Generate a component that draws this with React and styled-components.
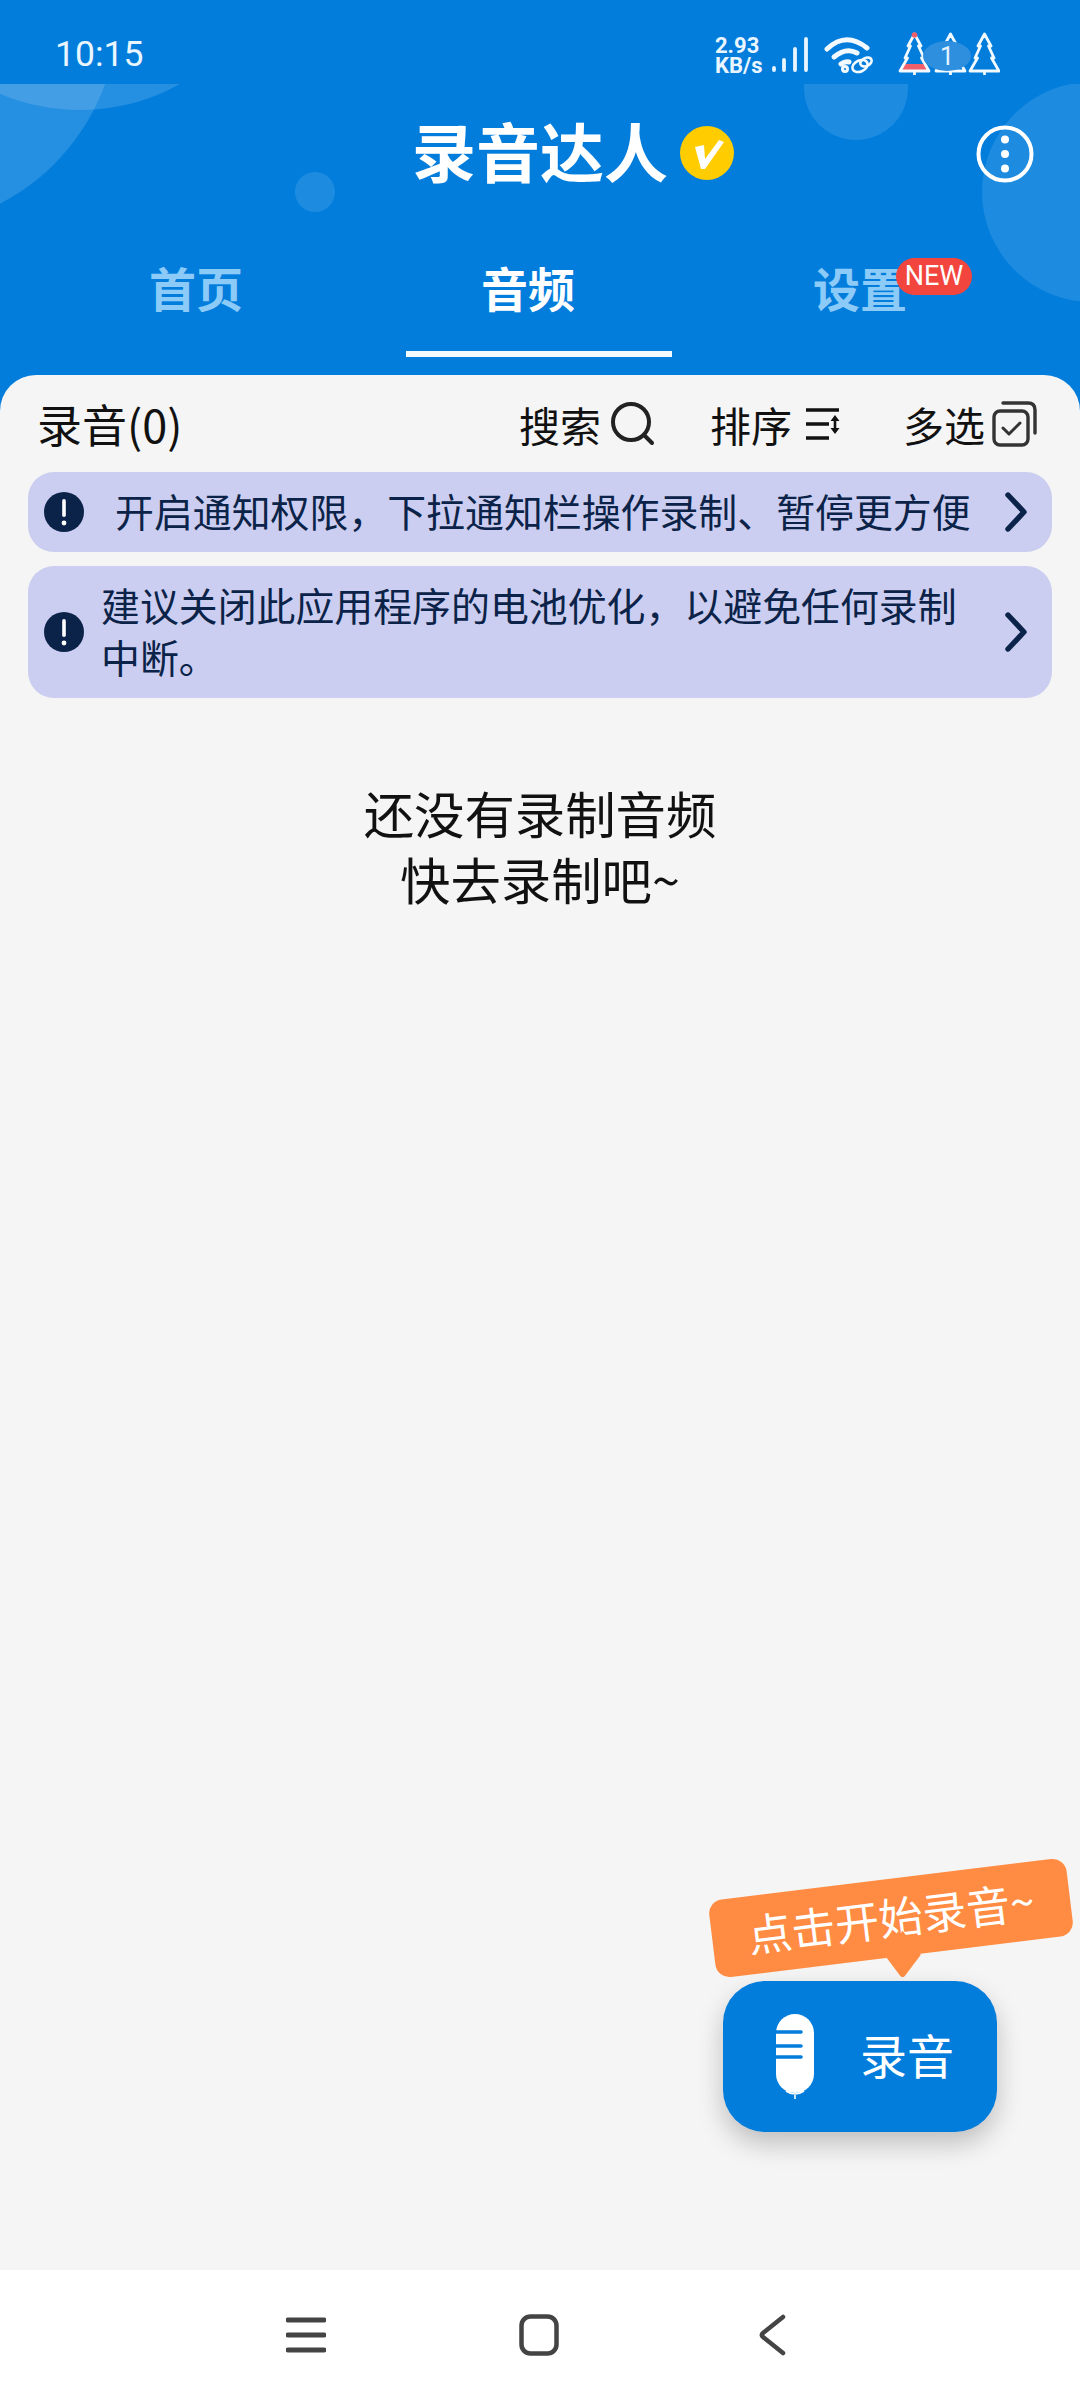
import React from "react";
import styled, { createGlobalStyle } from "styled-components";

const Global = createGlobalStyle`
  html, body { margin: 0; padding: 0; background: #027ddc; }
  * { box-sizing: border-box; }
  body { font-family: "Noto Sans CJK SC", "Noto Sans", sans-serif; }
`;

const Page = styled.div`
  width: 1080px;
  height: 2400px;
  display: flex;
  flex-direction: column;
  background: #027ddc;
  overflow: hidden;
`;

const Header = styled.header`
  position: relative;
  height: 375px;
  flex: none;
  color: #fff;
  overflow: hidden;
`;

const Decor = styled.svg`
  position: absolute;
  left: 0;
  top: 84px;
  width: 1080px;
  height: 291px;
`;

const StatusBar = styled.div`
  position: relative;
  height: 84px;
  display: flex;
  align-items: center;
  padding: 26px 0 0 55px;
`;

const Time = styled.span`
  font-family: Roboto, sans-serif;
  font-size: 35.5px;
  line-height: 1;
  color: #eaf6ff;
`;

const StatusRight = styled.div`
  margin-left: auto;
  margin-right: 80px;
  display: flex;
  align-items: center;
`;

const Speed = styled.div`
  font-family: Roboto, sans-serif;
  font-weight: 700;
  font-size: 22px;
  line-height: 20px;
  width: 56px;
  padding: 1px 0 0 1px;
  color: #eaf6ff;
`;

const StatusIcons = styled.svg`
  display: block;
  width: 230px;
  height: 50px;
`;

const TitleBar = styled.div`
  position: relative;
  height: 66px;
  margin-top: 36px;
  display: flex;
  justify-content: center;
  align-items: center;
`;

const Title = styled.h1`
  position: relative;
  top: -4px;
  margin: 0;
  font-size: 64px;
  line-height: 66px;
  font-weight: 700;
  color: #fff;
`;

const VBadge = styled.svg`
  position: absolute;
  left: 268px;
  top: 10px;
  width: 54px;
  height: 54px;
`;

const MenuButton = styled.svg`
  position: absolute;
  left: 976px;
  top: 5px;
  width: 58px;
  height: 58px;
`;

const Tabs = styled.nav`
  display: grid;
  grid-template-columns: repeat(3, 332px);
  padding-left: 30px;
  margin-top: 71px;
`;

const Tab = styled.div`
  position: relative;
  height: 60px;
  text-align: center;
  font-size: 47px;
  line-height: 60px;
  font-weight: 700;
  color: ${(p) => (p.$active ? "#fff" : "#8ccaf8")};
  ${(p) =>
    p.$active &&
    `&::after {
      content: "";
      position: absolute;
      left: 44px;
      top: 94px;
      width: 266px;
      height: 6px;
      background: #f4fbff;
    }`}
`;

const NewBadge = styled.span`
  position: absolute;
  left: 202px;
  top: 1px;
  width: 76px;
  height: 37px;
  border-radius: 19px;
  background: #f2453d;
  color: #fff;
  font-family: Roboto, sans-serif;
  font-weight: 400;
  font-size: 27px;
  line-height: 37px;
  text-align: center;
`;

const Content = styled.main`
  position: relative;
  flex: 1;
  background: #f5f5f5;
  border-radius: 36px 36px 0 0;
  display: flex;
  flex-direction: column;
  padding: 0 28px;
`;

const Toolbar = styled.div`
  height: 97px;
  display: flex;
  align-items: center;
  padding: 0 15px 0 9px;
`;

const Count = styled.div`
  font-size: 45px;
  color: #111;
  flex: 1;
`;

const ToolItem = styled.div`
  display: flex;
  align-items: center;
  font-size: 41px;
  line-height: 48px;
  color: #111;
  margin-left: ${(p) => p.$gap}px;
  gap: ${(p) => p.$iconGap}px;
`;

const Notice = styled.div`
  display: flex;
  align-items: center;
  height: ${(p) => p.$h}px;
  margin-bottom: 14px;
  background: #cbcef0;
  border-radius: 26px;
  padding: 0 24px 0 16px;
  color: #0b2348;
`;

const NoticeText = styled.div`
  flex: 1;
  font-size: 38.9px;
  line-height: 52px;
  padding: 0 30px 5px ${(p) => p.$indent}px;
`;

const Empty = styled.div`
  margin-top: 68px;
  text-align: center;
  font-size: 50.4px;
  line-height: 66px;
  color: #111;
`;

const Tip = styled.div`
  position: absolute;
  left: 711px;
  top: 1504px;
  width: 360px;
  height: 78px;
  border-radius: 14px;
  background: #ff8c42;
  color: #fff;
  font-size: 44px;
  line-height: 74px;
  text-align: center;
  white-space: nowrap;
  transform: rotate(-7deg);
  &::after {
    content: "";
    position: absolute;
    left: 172px;
    bottom: -14px;
    width: 30px;
    height: 30px;
    background: #ff8c42;
    border-radius: 0 0 4px 0;
    transform: rotate(52deg) skew(8deg, 8deg);
  }
`;

const RecordButton = styled.div`
  position: absolute;
  left: 723px;
  top: 1606px;
  width: 274px;
  height: 151px;
  border-radius: 42px;
  background: #027ddc;
  box-shadow: 0 12px 26px rgba(0, 0, 0, 0.22);
  color: #fff;
  display: flex;
  align-items: center;
  padding-left: 53px;
  font-size: 47px;
`;

const RecordLabel = styled.span`
  margin: 0 0 7px 46px;
`;

const NavBar = styled.footer`
  flex: none;
  height: 130px;
  background: #fff;
  display: flex;
  align-items: center;
`;

const NavIcon = styled.svg`
  display: block;
  margin-left: ${(p) => p.$ml}px;
`;

const Alert = () => (
  <svg width="40" height="40" viewBox="0 0 40 40" style={{ flex: "none" }}>
    <circle cx="20" cy="20" r="20" fill="#0b2348" />
    <rect x="18.2" y="7" width="3.6" height="18" rx="1.8" fill="#fff" />
    <circle cx="20" cy="31" r="2.4" fill="#fff" />
  </svg>
);

const Chevron = () => (
  <svg width="24" height="40" viewBox="0 0 24 40" style={{ flex: "none" }}>
    <path d="M4 3 L20 20 L4 37" fill="none" stroke="#0b2348" strokeWidth="5.4" strokeLinecap="round" strokeLinejoin="round" />
  </svg>
);

const Tree = ({ x, fillRed }) => (
  <g transform={`translate(${x} 0)`} fill="none" stroke="#f2faff" strokeWidth="2.8" strokeLinejoin="round">
    {fillRed && <path d="M6 33 L25 33 L30 40 L1 40 Z" fill="#f0606a" stroke="none" />}
    <path d="M15.5 3 L22 15 L19.5 15 L25 27 L22.5 27 L30 40 L1 40 L8.5 27 L6 27 L11.5 15 L9 15 Z" />
    <path d="M15.5 40 L15.5 44" />
    {fillRed && <circle cx="15.5" cy="4" r="2.8" fill="#f0606a" stroke="none" />}
  </g>
);

export default function App() {
  return (
    <Page>
      <Global />
      <Header>
        <Decor viewBox="0 84 1080 291">
          <circle cx="-100" cy="10" r="218" fill="#fff" fillOpacity="0.14" />
          <circle cx="80" cy="-95" r="205" fill="#fff" fillOpacity="0.14" />
          <circle cx="856" cy="88" r="52" fill="#fff" fillOpacity="0.11" />
          <circle cx="315" cy="192" r="20" fill="#fff" fillOpacity="0.11" />
          <circle cx="1092" cy="192" r="110" fill="#fff" fillOpacity="0.11" />
        </Decor>
        <StatusBar>
          <Time>10:15</Time>
          <StatusRight>
            <Speed>
              2.93
              <br />
              KB/s
            </Speed>
            <StatusIcons viewBox="770 30 230 50">
              <g fill="none" stroke="#eaf6ff" strokeWidth="3.8" strokeLinecap="round">
                <path d="M774 68 L774 70" />
                <path d="M784 60 L784 70" />
                <path d="M795 49 L795 70" />
                <path d="M806 39 L806 70" />
              </g>
              <g fill="none" stroke="#f2faff" strokeWidth="5" strokeLinecap="round">
                <path d="M827 49 Q846 31 867 48" />
                <path d="M834 57 Q846 47 857 53" />
                <path d="M841 64 Q845 61 849 62" />
                <circle cx="845" cy="69" r="1.5" />
              </g>
              <g fill="none" stroke="#f2faff" strokeWidth="2.6">
                <ellipse cx="860" cy="66" rx="8" ry="5.5" transform="rotate(-25 860 66)" />
                <ellipse cx="866" cy="62" rx="6" ry="4" transform="rotate(-25 866 62)" />
              </g>
              <g transform="translate(0 31)">
                <Tree x={899} fillRed />
                <Tree x={935} />
                <Tree x={969} />
              </g>
              <ellipse cx="947" cy="56" rx="24" ry="15" fill="#2f8fdf" />
              <text x="947" y="65" fontFamily="Roboto" fontSize="25" fill="#e6f4ff" textAnchor="middle">1</text>
            </StatusIcons>
          </StatusRight>
        </StatusBar>
        <TitleBar>
          <Title>
            录音达人
            <VBadge viewBox="0 0 54 54">
              <circle cx="27" cy="27" r="27" fill="#ffcc00" />
              <path d="M15 21 L24 19 L25 33 L39 14 L44 16 L25 43 L21 43 Z" fill="#fff" />
            </VBadge>
          </Title>
          <MenuButton viewBox="0 0 58 58">
            <circle cx="29" cy="29" r="26.5" fill="none" stroke="#fff" strokeWidth="4" />
            <circle cx="29" cy="14.5" r="4" fill="#fff" />
            <circle cx="29" cy="29" r="4" fill="#fff" />
            <circle cx="29" cy="43.5" r="4" fill="#fff" />
          </MenuButton>
        </TitleBar>
        <Tabs>
          <Tab>首页</Tab>
          <Tab $active>音频</Tab>
          <Tab>
            设置
            <NewBadge>NEW</NewBadge>
          </Tab>
        </Tabs>
      </Header>
      <Content>
        <Toolbar>
          <Count>录音(0)</Count>
          <ToolItem $iconGap={10} $gap={0}>
            搜索
            <svg width="44" height="44" viewBox="0 0 44 44">
              <circle cx="20" cy="20" r="18" fill="none" stroke="#222" strokeWidth="4" />
              <path d="M33 33 L41 41" stroke="#222" strokeWidth="4" strokeLinecap="round" />
            </svg>
          </ToolItem>
          <ToolItem $iconGap={13} $gap={55}>
            排序
            <svg width="36" height="34" viewBox="0 0 36 34">
              <path d="M1 3 H34 M1 17 H24 M1 31 H24" stroke="#111" strokeWidth="3.4" />
              <path d="M30 11 V24" stroke="#111" strokeWidth="2.6" />
              <path d="M30 8 L34.5 14 H25.5 Z M30 27 L34.5 21 H25.5 Z" fill="#111" />
            </svg>
          </ToolItem>
          <ToolItem $iconGap={7} $gap={62}>
            多选
            <svg width="45" height="46" viewBox="0 0 45 46">
              <rect x="2" y="10" width="34" height="34" rx="6" fill="none" stroke="#333" strokeWidth="3.4" />
              <path d="M11 2 H36 Q43 2 43 9 V32" fill="none" stroke="#333" strokeWidth="3.4" strokeLinecap="round" />
              <path d="M11 27 L17 33 L28 22" fill="none" stroke="#333" strokeWidth="3" strokeLinecap="round" strokeLinejoin="round" />
            </svg>
          </ToolItem>
        </Toolbar>
        <Notice $h={80}>
          <Alert />
          <NoticeText $indent={31}>开启通知权限，下拉通知栏操作录制、暂停更方便</NoticeText>
          <Chevron />
        </Notice>
        <Notice $h={132}>
          <Alert />
          <NoticeText $indent={17}>建议关闭此应用程序的电池优化，以避免任何录制中断。</NoticeText>
          <Chevron />
        </Notice>
        <Empty>
          还没有录制音频
          <br />
          快去录制吧~
        </Empty>
        <Tip>点击开始录音~</Tip>
        <RecordButton>
          <svg width="38" height="86" viewBox="0 0 38 86">
            <path d="M0 19 A19 19 0 0 1 38 19 V60 A19 19 0 0 1 0 60 Z" fill="#fff" />
            <path d="M0 18 H25 M0 32 H25 M0 43 H25" stroke="#027ddc" strokeWidth="3.6" strokeLinecap="round" />
            <path d="M10 77 Q19 83 28 77 M19 81 V85" fill="none" stroke="#fff" strokeWidth="1.6" />
          </svg>
          <RecordLabel>录音</RecordLabel>
        </RecordButton>
      </Content>
      <NavBar>
        <NavIcon $ml={286} width="40" height="36" viewBox="0 0 40 36">
          <path d="M2 3 H38 M2 18 H38 M2 33 H38" stroke="#444" strokeWidth="5" strokeLinecap="round" />
        </NavIcon>
        <NavIcon $ml={193} width="40" height="42" viewBox="0 0 40 42">
          <rect x="2.5" y="2.5" width="35" height="37" rx="9" fill="none" stroke="#444" strokeWidth="4.5" />
        </NavIcon>
        <NavIcon $ml={199} width="28" height="42" viewBox="0 0 28 42">
          <path d="M25 3 L5 19 Q2.5 21 5 23 L25 39" fill="none" stroke="#444" strokeWidth="4.5" strokeLinecap="round" strokeLinejoin="round" />
        </NavIcon>
      </NavBar>
    </Page>
  );
}
